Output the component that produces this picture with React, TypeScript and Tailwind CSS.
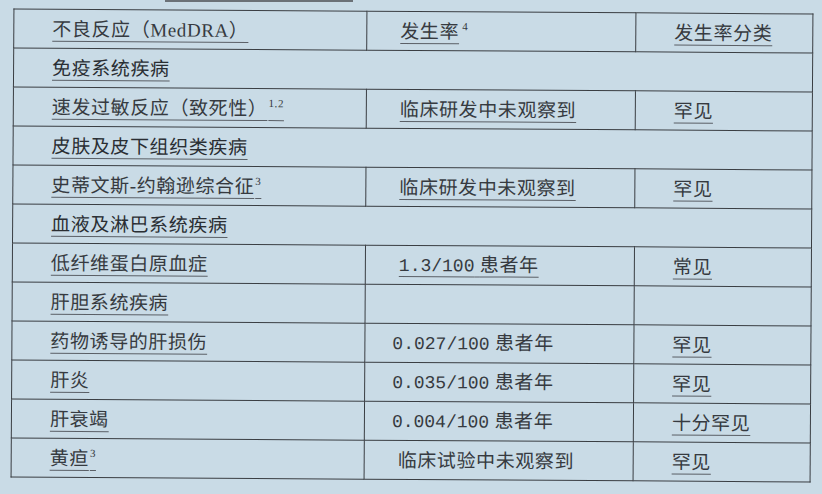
const serif = "font-['Liberation_Serif','Noto_Sans_CJK_SC',serif]";

type Row =
  | { kind: 'group'; label: string }
  | {
      kind: 'item';
      label: string;
      sup?: string;
      rate: string;
      rateLine?: boolean;
      rateMono?: boolean;
      level: string;
    };

const rows: Row[] = [
  { kind: 'group', label: '免疫系统疾病' },
  { kind: 'item', label: '速发过敏反应（致死性）', sup: '1.2', rate: '临床研发中未观察到', rateLine: true, level: '罕见' },
  { kind: 'group', label: '皮肤及皮下组织类疾病' },
  { kind: 'item', label: '史蒂文斯-约翰逊综合征', sup: '3', rate: '临床研发中未观察到', rateLine: true, level: '罕见' },
  { kind: 'group', label: '血液及淋巴系统疾病' },
  { kind: 'item', label: '低纤维蛋白原血症', rate: '1.3/100 患者年', rateLine: true, rateMono: true, level: '常见' },
  { kind: 'item', label: '肝胆系统疾病', rate: '', level: '' },
  { kind: 'item', label: '药物诱导的肝损伤', rate: '0.027/100 患者年', rateMono: true, level: '罕见' },
  { kind: 'item', label: '肝炎', rate: '0.035/100 患者年', rateMono: true, level: '罕见' },
  { kind: 'item', label: '肝衰竭', rate: '0.004/100 患者年', rateMono: true, level: '十分罕见' },
  { kind: 'item', label: '黄疸', sup: '3', rate: '临床试验中未观察到', level: '罕见' },
];

const line = 'underline decoration-[#5a5f66] decoration-1 underline-offset-[5px]';
const cell = 'border-[1.5px] border-[#3a3e43] h-[39px] align-middle';
const supCls = 'text-[11px] top-[-0.7em]';

function Rate({ text, mono }: { text: string; mono?: boolean }) {
  if (!mono) return <>{text}</>;
  const [num, unit] = text.split(' ');
  return (
    <>
      <span className="font-['Liberation_Mono',monospace] text-[18px] tracking-normal">{num}</span>
      <span> {unit}</span>
    </>
  );
}

export default function App() {
  return (
    <div className={`w-[822px] h-[494px] overflow-hidden bg-[#c9dbe6] text-[#363a40] ${serif}`}>
      {/* leftover underline from the line above the table */}
      <div className="ml-[165px] w-[188px] h-[2px] bg-[#6b7177]" />

      <div className="ml-[12px] mt-[9px] w-[799px] rotate-[0.35deg]">
        <table className="w-full table-fixed border-collapse text-[19px] tracking-[0.6px] leading-none">
          <colgroup>
            <col className="w-[353px]" />
            <col className="w-[269px]" />
            <col className="w-[177px]" />
          </colgroup>
          <tbody>
            <tr>
              <td className={`${cell} pl-[38px]`}>
                <span className={line}>不良反应（MedDRA）</span>
              </td>
              <td className={`${cell} pl-[33px]`}>
                <span className={line}>发生率</span>
                <sup className={`${supCls} ml-[3px]`}>4</sup>
              </td>
              <td className={`${cell} pl-[38px]`}>
                <span className={line}>发生率分类</span>
              </td>
            </tr>
            {rows.map((r, i) =>
              r.kind === 'group' ? (
                <tr key={i}>
                  <td colSpan={3} className={`${cell} pl-[38px] text-[#2a2e33]`}>
                    <span className={line}>{r.label}</span>
                  </td>
                </tr>
              ) : (
                <tr key={i}>
                  <td className={`${cell} pl-[38px]`}>
                    <span className={line}>
                      {r.label}
                      {r.sup && <sup className={`${supCls} ml-[1px]`}>{r.sup}</sup>}
                    </span>
                  </td>
                  <td className={`${cell} ${r.rateMono && !r.rateLine ? 'pl-[27px]' : 'pl-[33px]'}`}>
                    <span className={r.rateLine ? line : ''}>
                      <Rate text={r.rate} mono={r.rateMono} />
                    </span>
                  </td>
                  <td className={`${cell} pl-[38px]`}>
                    {r.level && <span className={line}>{r.level}</span>}
                  </td>
                </tr>
              )
            )}
          </tbody>
        </table>
      </div>
    </div>
  );
}
